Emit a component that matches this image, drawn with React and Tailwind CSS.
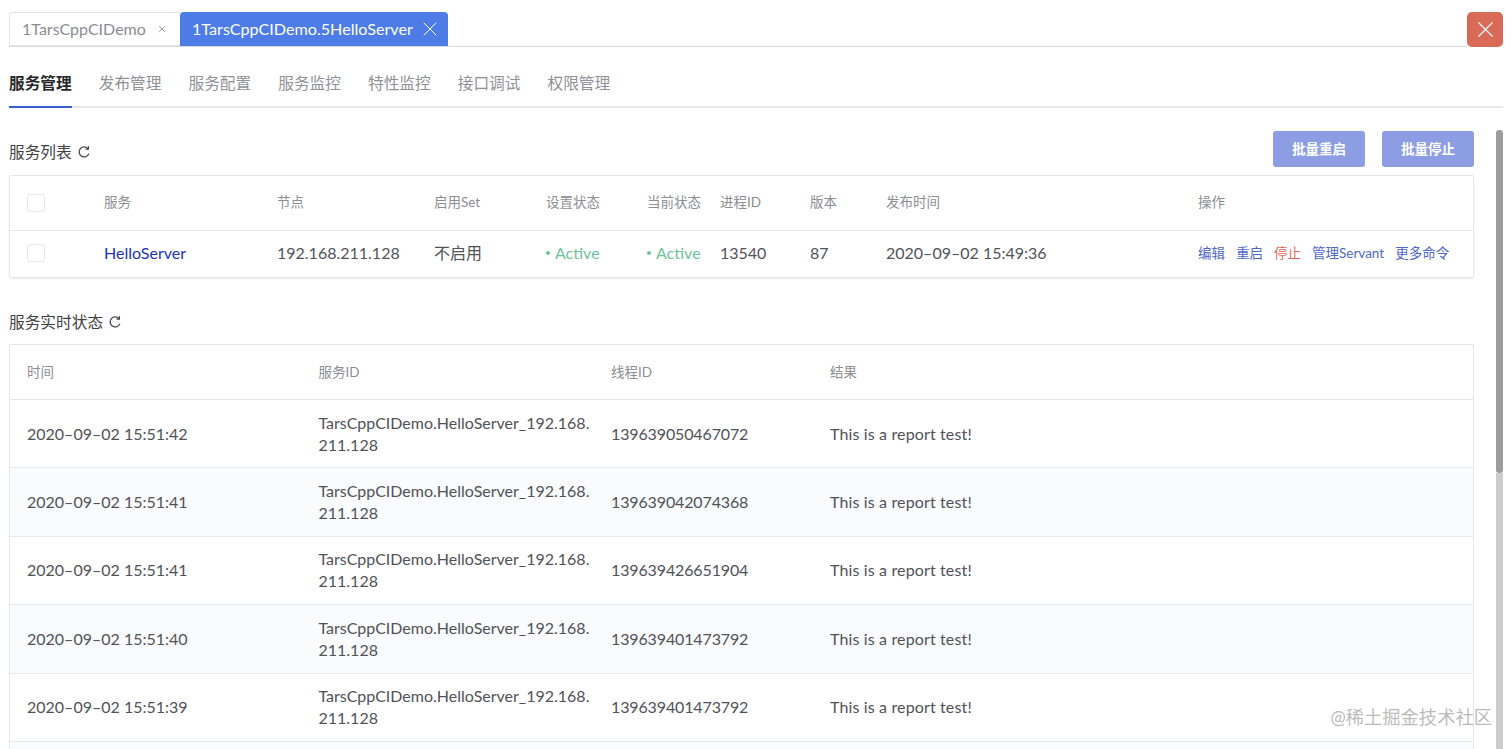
import React from "react";
import { X } from "lucide-react";

const font = "font-['Lato','Noto_Sans_CJK_SC',sans-serif]";

const navItems = ["服务管理", "发布管理", "服务配置", "服务监控", "特性监控", "接口调试", "权限管理"];

const reports = [
    ["2020–09–02 15:51:42", "139639050467072"],
    ["2020–09–02 15:51:41", "139639042074368"],
    ["2020–09–02 15:51:41", "139639426651904"],
    ["2020–09–02 15:51:40", "139639401473792"],
    ["2020–09–02 15:51:39", "139639401473792"],
];

const Checkbox = () => <span className="block w-[18px] h-[18px] rounded-[3px] border border-[#e6e8ec] bg-white" />;

const Refresh = () => (
    <svg width="14" height="14" viewBox="0 0 14 14" fill="none" stroke="#444" strokeWidth="1.3" strokeLinecap="round">
        <path d="M11.6 9.2A5 5 0 1 1 10.9 3.6" />
        <path d="M11.4 1.6V4.1H8.9" strokeLinejoin="round" />
    </svg>
);

const SectionTitle = ({ children }) => (
    <div className="flex items-center gap-[5px] text-[15.7px] text-[#3f3f44] leading-5">
        <span>{children}</span>
        <Refresh />
    </div>
);

const Active = () => (
    <span className="flex items-center text-[#6fc39a]">
        <span className="w-[4px] h-[4px] ml-[1px] mr-[5px] rounded-full bg-[#6fc39a]" />
        Active
    </span>
);

export default function App() {
    return (
        <div className={`${font} h-[749px] w-[1512px] overflow-hidden bg-white relative`}>
            {/* Tabs */}
            <div className="flex items-start pl-[9px] pr-[9px] pt-[12px]">
                <div className="flex flex-1 h-[35px] border-b border-[#d9dbdf]">
                    <div className="flex items-center w-[171px] h-[34px] pl-[12px] border border-r-0 border-[#e3e5e8] rounded-tl-[4px] text-[16px] text-[#8a8d93]">
                        <span>1TarsCppCIDemo</span>
                        <X size={10} className="ml-[11px] text-[#888]" />
                    </div>
                    <div className="flex items-center w-[268px] h-[34px] pl-[12px] rounded-t-[4px] bg-[#4d7ce6] text-[16.15px] text-white">
                        <span>1TarsCppCIDemo.5HelloServer</span>
                        <X size={24} strokeWidth={1} className="ml-[5px]" />
                    </div>
                </div>
                <button className="flex items-center justify-center w-[36px] h-[35px] rounded-[5px] bg-[#d96a58] text-white">
                    <X size={27} strokeWidth={1} />
                </button>
            </div>

            {/* Nav */}
            <div className="flex gap-[27px] h-[61px] ml-[9px] mr-[9px] border-b-2 border-[#e8e9eb] text-[15.7px]">
                {navItems.map((item, i) => (
                    <div
                        key={item}
                        className={`flex items-start pt-[25px] h-[61px] ${i === 0 ? "font-bold text-[#26272b] border-b-2 border-[#3a5fc8]" : "text-[#8f9196]"}`}
                    >
                        {item}
                    </div>
                ))}
            </div>

            {/* Scrollbar */}
            <div className="absolute right-[9px] top-[130px] h-[343px] w-[7px] rounded-[3px] bg-[#9d9d9d]" />
            <div className="absolute right-[9px] top-[473px] bottom-0 w-[7px] bg-[#cdcdcd]" />

            <div className="ml-[9px] w-[1465px]">
                {/* Service list */}
                <div className="flex items-start justify-between pt-[23px] h-[67px]">
                    <div className="mt-[11px]">
                        <SectionTitle>服务列表</SectionTitle>
                    </div>
                    <div className="flex gap-[17px]">
                        <button className="w-[92px] h-[36px] rounded-[3px] bg-[#8c9de3] text-white text-[13.5px] font-bold">批量重启</button>
                        <button className="w-[92px] h-[36px] rounded-[3px] bg-[#8c9de3] text-white text-[13.5px] font-bold">批量停止</button>
                    </div>
                </div>
                <div className="border border-[#e6e7ea] rounded-[2px] shadow-[0_1px_2px_rgba(0,0,0,0.08)]">
                    <div className="flex items-center h-[55px] pb-[1px] border-b border-[#e6e7ea] text-[13.5px] text-[#8c8e92]">
                        <div className="w-[94px] pl-[17px]"><Checkbox /></div>
                        <div className="w-[173px]">服务</div>
                        <div className="w-[157px]">节点</div>
                        <div className="w-[112px]">启用Set</div>
                        <div className="w-[101px]">设置状态</div>
                        <div className="w-[73px]">当前状态</div>
                        <div className="w-[90px]">进程ID</div>
                        <div className="w-[76px]">版本</div>
                        <div className="w-[312px]">发布时间</div>
                        <div>操作</div>
                    </div>
                    <div className="flex items-center h-[46px] pb-[2px] text-[16px] text-[#515257]">
                        <div className="w-[94px] pl-[17px]"><Checkbox /></div>
                        <div className="w-[173px] text-[#1a33b8]">HelloServer</div>
                        <div className="w-[157px]">192.168.211.128</div>
                        <div className="w-[111px]">不启用</div>
                        <div className="w-[101px]"><Active /></div>
                        <div className="w-[74px]"><Active /></div>
                        <div className="w-[90px]">13540</div>
                        <div className="w-[76px]">87</div>
                        <div className="w-[312px]">2020–09–02 15:49:36</div>
                        <div className="flex gap-[11px] text-[13.5px] text-[#4f67c9]">
                            <span>编辑</span>
                            <span>重启</span>
                            <span className="text-[#d96a58]">停止</span>
                            <span>管理Servant</span>
                            <span>更多命令</span>
                        </div>
                    </div>
                </div>

                {/* Realtime status */}
                <div className="mt-[34px] mb-[12px]">
                    <SectionTitle>服务实时状态</SectionTitle>
                </div>
                <div className="border border-[#e6e7ea]">
                    <div className="flex items-center h-[55px] border-b border-[#e6e7ea] text-[13.5px] text-[#8c8e92]">
                        <div className="w-[308.5px] pl-[17px]">时间</div>
                        <div className="w-[292.5px]">服务ID</div>
                        <div className="w-[219px]">线程ID</div>
                        <div>结果</div>
                    </div>
                    {reports.map(([time, tid], i) => (
                        <div
                            key={i}
                            className={`flex items-center h-[68.4px] border-b border-[#e8e9eb] text-[16px] leading-[22px] text-[#515257] ${i % 2 ? "bg-[#f9fbfd]" : "bg-white"}`}
                        >
                            <div className="w-[308.5px] pl-[17px]">{time}</div>
                            <div className="w-[292.5px]">TarsCppCIDemo.HelloServer_192.168.<br />211.128</div>
                            <div className="w-[219px] tracking-[-0.13px]">{tid}</div>
                            <div className="tracking-[0.14px]">This is a report test!</div>
                        </div>
                    ))}
                    <div className="h-[20px] bg-[#f9fbfd]" />
                </div>
            </div>

            {/* Watermark */}
            <div className="absolute right-[20px] top-[707px] text-[18.3px] leading-5 text-[#a9a9a9]/80">@稀土掘金技术社区</div>
        </div>
    );
}
